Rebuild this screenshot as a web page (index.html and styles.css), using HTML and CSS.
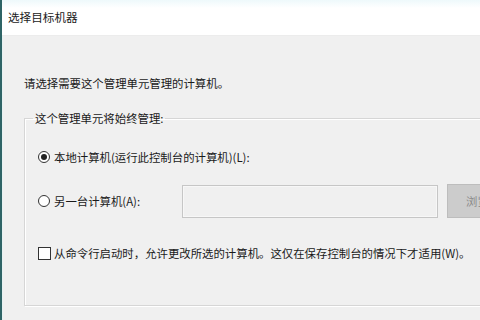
FILE: index.html
```html
<!DOCTYPE html>
<html lang="zh-CN">
<head>
<meta charset="utf-8">
<title>选择目标机器</title>
<link rel="stylesheet" href="styles.css">
</head>
<body>
<div class="window">
  <div class="titlebar">选择目标机器</div>
  <div class="content">
    <p class="intro">请选择需要这个管理单元管理的计算机。</p>
    <fieldset class="group">
      <legend class="legend">这个管理单元将始终管理:</legend>
      <div class="row row-local">
        <span class="radio checked"></span>
        <span class="label">本地计算机(运行此控制台的计算机)(L):</span>
      </div>
      <div class="row row-other">
        <span class="radio"></span>
        <span class="label label-other">另一台计算机(A):</span>
        <span class="textbox"></span>
        <span class="button">浏览(R)...</span>
      </div>
      <div class="row row-check">
        <span class="checkbox"></span>
        <span class="label">从命令行启动时，允许更改所选的计算机。这仅在保存控制台的情况下才适用(W)。</span>
      </div>
    </fieldset>
  </div>
</div>
</body>
</html>
```
FILE: styles.css
```css
html, body {
  margin: 0;
  padding: 0;
  width: 480px;
  height: 320px;
  overflow: hidden;
  background: #f0f0f0;
}
.window {
  width: 480px;
  height: 320px;
  box-sizing: border-box;
  border-left: 2px solid #2f6466;
  box-shadow: inset 1px 0 0 #e6f2f2;
  font-family: "Noto Sans CJK SC", "Noto Sans", sans-serif;
  color: #1a1a1a;
  font-size: 11.4px;
  overflow: hidden;
}
.titlebar {
  height: 36px;
  line-height: 34px;
  padding-left: 6px;
  font-size: 11.6px;
  background: linear-gradient(#eef9fb 0, #ffffff 8px, #ffffff 100%);
  border-bottom: 1px solid #ececec;
  box-sizing: border-box;
}
.content {
  padding-left: 22px;
}
.intro {
  margin: 0;
  padding-top: 39px;
  line-height: 16px;
}
.group {
  margin: 19px -40px 0 0;
  padding: 19px 0 44px 8px;
  border: 1px solid #d6d6d6;
  box-shadow: inset 1px 1px 0 #ffffff, 1px 1px 0 #ffffff;
  min-width: 0;
}
.legend {
  padding: 0 2px;
  line-height: 16px;
}
.row {
  display: flex;
  align-items: center;
  padding-left: 5px;
}
.row-local {
  height: 24px;
}
.row-other {
  height: 34px;
  margin-top: 15px;
}
.row-check {
  height: 16px;
  margin-top: 27px;
}
.radio {
  flex: 0 0 auto;
  width: 12px;
  height: 12px;
  box-sizing: border-box;
  border: 1px solid #333333;
  border-radius: 50%;
  background: #ffffff;
  margin-right: 4px;
  display: flex;
  align-items: center;
  justify-content: center;
}
.radio.checked::after {
  content: "";
  width: 6px;
  height: 6px;
  border-radius: 50%;
  background: #222222;
}
.checkbox {
  flex: 0 0 auto;
  width: 13px;
  height: 13px;
  box-sizing: border-box;
  border: 1px solid #333333;
  background: #ffffff;
  margin-right: 3px;
}
.label {
  white-space: nowrap;
  line-height: 16px;
}
.label-other {
  flex: 0 0 128px;
}
.textbox {
  flex: 0 0 auto;
  width: 256px;
  height: 33px;
  box-sizing: border-box;
  border: 1px solid #c6c6c6;
  box-shadow: inset 0 0 0 1px #f7f7f7;
  background: #f0f0f0;
}
.button {
  flex: 0 0 auto;
  margin-left: 9px;
  width: 76px;
  height: 34px;
  box-sizing: border-box;
  border: 1px solid #bdbdbd;
  background: #cccccc;
  color: #8a8a8a;
  line-height: 32px;
  padding-left: 18px;
  white-space: nowrap;
}
```
